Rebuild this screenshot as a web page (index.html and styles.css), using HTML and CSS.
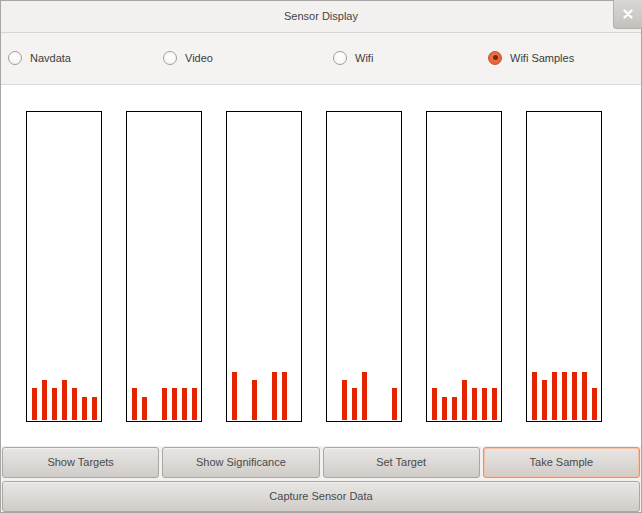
FILE: index.html
```html
<!DOCTYPE html>
<html>
<head>
<meta charset="utf-8">
<link rel="stylesheet" href="styles.css">
</head>
<body>
<div class="window">
  <div class="titlebar">
    <span class="title">Sensor Display</span>
    <div class="close"><svg width="10" height="10" viewBox="0 0 10 10"><path d="M1.5 1.5 L8.5 8.5 M8.5 1.5 L1.5 8.5" stroke="#fff" stroke-width="2.4" stroke-linecap="round"/></svg></div>
  </div>
  <div class="radios">
    <label class="radio"><span class="dot"></span>Navdata</label>
    <label class="radio"><span class="dot"></span>Video</label>
    <label class="radio"><span class="dot"></span>Wifi</label>
    <label class="radio"><span class="dot on"></span>Wifi Samples</label>
  </div>
  <div class="canvas">
    <div class="box"><div class="bar" style="height:32px"></div><div class="bar" style="height:40px"></div><div class="bar" style="height:32px"></div><div class="bar" style="height:40px"></div><div class="bar" style="height:32px"></div><div class="bar" style="height:23px"></div><div class="bar" style="height:23px"></div></div>
    <div class="box"><div class="bar" style="height:32px"></div><div class="bar" style="height:23px"></div><div class="bar" style="height:0px"></div><div class="bar" style="height:32px"></div><div class="bar" style="height:32px"></div><div class="bar" style="height:32px"></div><div class="bar" style="height:32px"></div></div>
    <div class="box"><div class="bar" style="height:48px"></div><div class="bar" style="height:0px"></div><div class="bar" style="height:40px"></div><div class="bar" style="height:0px"></div><div class="bar" style="height:48px"></div><div class="bar" style="height:48px"></div><div class="bar" style="height:0px"></div></div>
    <div class="box"><div class="bar" style="height:0px"></div><div class="bar" style="height:40px"></div><div class="bar" style="height:32px"></div><div class="bar" style="height:48px"></div><div class="bar" style="height:0px"></div><div class="bar" style="height:0px"></div><div class="bar" style="height:32px"></div></div>
    <div class="box"><div class="bar" style="height:32px"></div><div class="bar" style="height:23px"></div><div class="bar" style="height:23px"></div><div class="bar" style="height:40px"></div><div class="bar" style="height:32px"></div><div class="bar" style="height:32px"></div><div class="bar" style="height:32px"></div></div>
    <div class="box"><div class="bar" style="height:48px"></div><div class="bar" style="height:40px"></div><div class="bar" style="height:48px"></div><div class="bar" style="height:48px"></div><div class="bar" style="height:48px"></div><div class="bar" style="height:48px"></div><div class="bar" style="height:32px"></div></div>
  </div>
  <div class="buttons">
    <div class="row">
      <button class="btn">Show Targets</button>
      <button class="btn">Show Significance</button>
      <button class="btn">Set Target</button>
      <button class="btn focus">Take Sample</button>
    </div>
    <button class="btn">Capture Sensor Data</button>
  </div>
</div>
</body>
</html>
```
FILE: styles.css
```css
html, body { margin: 0; padding: 0; background: #fff; }
body { font-family: "Liberation Sans", Arial, sans-serif; font-size: 11px; color: #3c3c3c; }
.window {
  width: 642px; height: 513px; box-sizing: border-box;
  border: 1px solid #a6a6a6;
  display: flex; flex-direction: column;
  background: #f2f1f0;
}
.titlebar {
  height: 31px; box-sizing: content-box; border-bottom: 1px solid #d8d4d0;
  background: #f2f1f0;
  display: flex; align-items: center; justify-content: center;
  position: relative;
}
.title { color: #444; font-size: 11px; margin-bottom: 2px; }
.close {
  position: absolute; right: -1px; top: -1px;
  width: 28px; height: 28px;
  background: linear-gradient(#d9d7d4, #c4c0bc);
  border-left: 1px solid #b4b0ac; border-bottom: 1px solid #b4b0ac;
  border-bottom-left-radius: 4px;
  display: flex; align-items: center; justify-content: center;
}
.radios {
  height: 51px; border-bottom: 1px solid #ddd9d5;
  background: #f4f3f1;
  display: grid; grid-template-columns: 155px 170px 155px 1fr;
  align-items: center; padding-left: 7px; padding-bottom: 2px; box-sizing: content-box;
  height: 49px;
}
.radio { display: flex; align-items: center; gap: 8px; color: #3c3c3c; }
.dot {
  width: 14px; height: 14px; box-sizing: border-box; border-radius: 50%;
  border: 1px solid #a59d95;
  background: radial-gradient(circle at 50% 35%, #ffffff, #f4f2f0);
  position: relative;
}
.dot.on {
  border-color: #c4532b;
  background: radial-gradient(circle at 50% 40%, #f27a4c, #dd5a2c);
}
.dot.on::after {
  content: ""; position: absolute; left: 3.5px; top: 3.5px;
  width: 5px; height: 5px; border-radius: 50%; background: #6e2a16;
}
.canvas {
  height: 361px; background: #fff;
  display: flex; gap: 24px; padding: 26px 0 0 25px; box-sizing: border-box;
}
.box {
  width: 76px; height: 311px; box-sizing: border-box;
  border: 1px solid #000;
  display: flex; align-items: flex-end; gap: 5px;
  padding: 0 0 1px 5px;
}
.bar { width: 5px; background: #e42400; }
.buttons {
  height: 66px; box-sizing: border-box; padding: 1px 1px 0 1px;
  display: flex; flex-direction: column; gap: 3px;
  background: #f2f1f0;
}
.row { display: flex; gap: 3px; }
.btn {
  flex: 1; height: 31px; margin: 0;
  font-family: "Liberation Sans", Arial, sans-serif; font-size: 11px; color: #4a4a4a;
  background: linear-gradient(#e8e6e4, #d0ccc8);
  border: 1px solid #aaa6a2; border-radius: 3px;
  box-shadow: inset 0 1px 0 #f2f0ee;
  padding: 0 0 2px 0;
}
.btn.focus { border-color: #f08c5e; box-shadow: inset 0 0 0 1px #f3c2a8; }
```
